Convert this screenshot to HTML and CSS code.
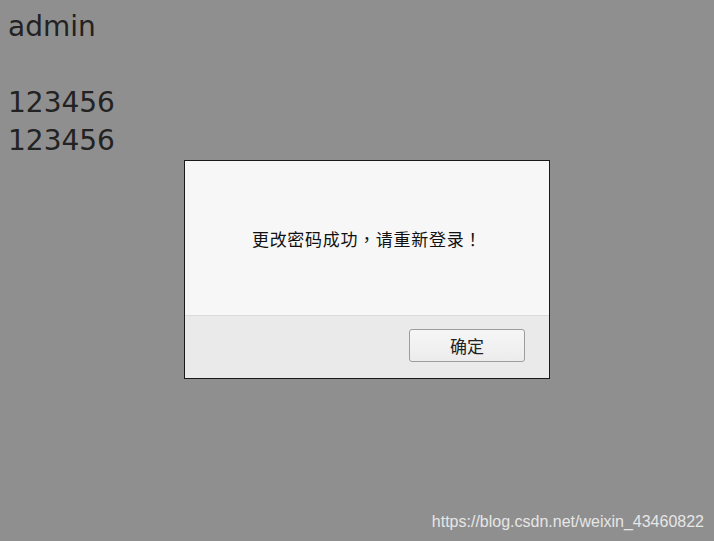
FILE: index.html
```html
<!DOCTYPE html>
<html lang="zh">
<head>
<meta charset="utf-8">
<title>admin</title>
<link rel="stylesheet" href="styles.css">
</head>
<body>
<div class="page">admin<br><br>123456<br>123456</div>
<div class="dialog">
  <div class="dialog-body">更改密码成功<span class="punct">，</span>请重新登录<span class="punct">！</span></div>
  <div class="dialog-footer"><button class="btn">确定</button></div>
</div>
<div class="watermark">https://blog.csdn.net/weixin_43460822</div>
</body>
</html>
```
FILE: styles.css
```css
html, body {
  height: 100%;
}
body {
  margin: 8px;
  background: #8f8f8f;
  font-family: "DejaVu Sans", sans-serif;
  overflow: hidden;
}
.page {
  font-size: 28px;
  line-height: 38px;
  color: #222;
}
.dialog {
  position: absolute;
  left: 184px;
  top: 160px;
  width: 364px;
  border: 1px solid #1a1a1a;
  background: #f7f7f7;
  display: flex;
  flex-direction: column;
}
.dialog-body {
  height: 154px;
  display: flex;
  align-items: center;
  justify-content: center;
  font-family: "Noto Sans CJK SC", sans-serif;
  font-size: 17px;
  letter-spacing: 0.7px;
  color: #111;
  padding-top: 1px;
  box-sizing: border-box;
}
.punct {
  font-family: "Noto Sans CJK TC", sans-serif;
  display: inline-block;
  width: 1em;
  text-align: center;
  margin-right: 0.7px;
  white-space: nowrap;
}
.dialog-footer {
  border-top: 1px solid #dcdcdc;
  background: #eaeaea;
  height: 63px;
  box-sizing: border-box;
  padding: 13px 24px 0 0;
  display: flex;
  justify-content: flex-end;
  align-items: flex-start;
}
.btn {
  width: 116px;
  height: 33px;
  border: 1px solid #9d9d9d;
  border-radius: 3px;
  background: linear-gradient(#f6f6f6, #ececec);
  font-family: "Noto Sans CJK SC", sans-serif;
  font-size: 17px;
  color: #222;
  padding: 0;
  line-height: 31px;
}
.watermark {
  position: absolute;
  right: 10px;
  bottom: 10px;
  font-family: "Liberation Sans", Arial, sans-serif;
  font-size: 16px;
  color: #e6e6e6;
  line-height: 18px;
}
```
